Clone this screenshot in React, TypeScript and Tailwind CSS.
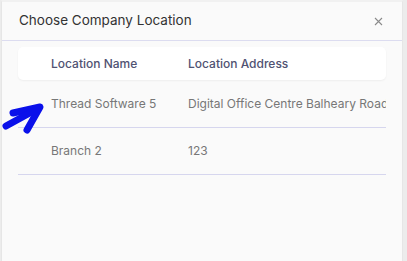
import React from 'react';

const rows = [
    { name: 'Thread Software 5', address: 'Digital Office Centre Balheary Road' },
    { name: 'Branch 2', address: '123' },
];

export default function App() {
    return (
        <div className="w-[407px] h-[261px] bg-[#ececec] overflow-hidden relative" style={{ fontFamily: 'Inter, "Open Sans", sans-serif' }}>
            <div className="ml-[1px] w-[402px] h-full bg-[#fafafa] border-l border-r border-[#e6e6e6] border-t-2 border-t-[#f1f1f1]">
                <div className="h-[39px] px-[17px] flex items-center justify-between border-b border-[#dcdcf0]">
                    <h3 className="text-[13.5px] text-[#333333] -mt-[1px]">Choose Company Location</h3>
                    <button className="text-[#8a8a8a] mr-[2px]">
                        <svg width="9" height="9" viewBox="0 0 9 9" fill="none" stroke="currentColor" strokeWidth="1.1">
                            <path d="M1 1 L8 8 M8 1 L1 8" />
                        </svg>
                    </button>
                </div>

                <div className="px-[16px] pt-[6px]">
                    <div className="h-[33px] bg-white rounded-[5px] shadow-[0_1px_2px_rgba(0,0,0,0.05)] flex items-center text-[12px] font-medium text-[#505272]">
                        <div className="w-[170px] pl-[33px] shrink-0">Location Name</div>
                        <div className="flex-1">Location Address</div>
                    </div>

                    {rows.map((row, i) => (
                        <div key={i} className={`${i === 0 ? 'h-[48px]' : 'h-[47px]'} flex items-center text-[12px] text-[#777777] border-b border-[#d6d6ee]`}>
                            <div className="w-[170px] pl-[33px] shrink-0 whitespace-nowrap">{row.name}</div>
                            <div className="flex-1 min-w-0 whitespace-nowrap overflow-hidden pr-[3px]">{row.address}</div>
                        </div>
                    ))}
                </div>
            </div>

            {/* hand drawn pointer */}
            <svg className="absolute left-0 top-[100px]" width="48" height="36" viewBox="0 100 48 36" fill="none" stroke="#0a10ea" strokeWidth="7" strokeLinecap="round" strokeLinejoin="round">
                <path d="M13 113 L40 107 L27 130" />
                <path d="M6 126 L37 109" />
            </svg>
        </div>
    );
}
